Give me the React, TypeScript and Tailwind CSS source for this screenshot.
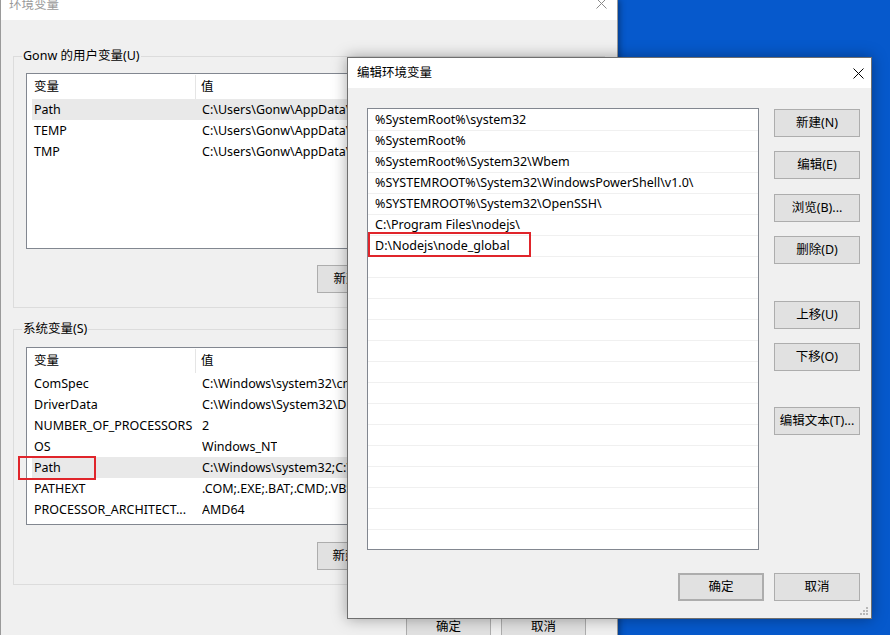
import React from 'react'

type Row = { name: string; value: string; hot?: boolean }

const userVars: Row[] = [
  { name: 'Path', value: 'C:\\Users\\Gonw\\AppData\\Local\\Microsoft\\WindowsApps;', hot: true },
  { name: 'TEMP', value: 'C:\\Users\\Gonw\\AppData\\Local\\Temp' },
  { name: 'TMP', value: 'C:\\Users\\Gonw\\AppData\\Local\\Temp' },
]

const sysVars: Row[] = [
  { name: 'ComSpec', value: 'C:\\Windows\\system32\\cmd.exe' },
  { name: 'DriverData', value: 'C:\\Windows\\System32\\Drivers\\DriverData' },
  { name: 'NUMBER_OF_PROCESSORS', value: '2' },
  { name: 'OS', value: 'Windows_NT' },
  { name: 'Path', value: 'C:\\Windows\\system32;C:\\Windows;C:\\Windows\\System32\\Wbem;', hot: true },
  { name: 'PATHEXT', value: '.COM;.EXE;.BAT;.CMD;.VBS;.VBE;.JS;.JSE;.WSF;.WSH;.MSC' },
  { name: 'PROCESSOR_ARCHITECT...', value: 'AMD64' },
]

const paths = [
  '%SystemRoot%\\system32',
  '%SystemRoot%',
  '%SystemRoot%\\System32\\Wbem',
  '%SYSTEMROOT%\\System32\\WindowsPowerShell\\v1.0\\',
  '%SYSTEMROOT%\\System32\\OpenSSH\\',
  'C:\\Program Files\\nodejs\\',
  'D:\\Nodejs\\node_global',
]

function CloseX({ color = '#000' }: { color?: string }) {
  return (
    <svg width="11" height="11" viewBox="0 0 11 11">
      <path d="M0.5 0.5 L10.5 10.5 M10.5 0.5 L0.5 10.5" stroke={color} strokeWidth="1" />
    </svg>
  )
}

function Btn({ children, className = '' }: { children: React.ReactNode; className?: string }) {
  return (
    <div
      className={
        'h-[28px] shrink-0 bg-[#e1e1e1] border border-[#adadad] flex items-center justify-center text-black whitespace-nowrap ' +
        className
      }
    >
      {children}
    </div>
  )
}

function VarList({ rows, height }: { rows: Row[]; height: string }) {
  return (
    <div className={'bg-white border border-[#828790] overflow-hidden ' + height}>
      <div className="h-[25px] flex items-center pt-[1px]">
        <div className="w-[169px] pl-[7px] h-full flex items-center border-r border-[#e5e5e5]">变量</div>
        <div className="pl-[5px]">值</div>
      </div>
      {rows.map((r) => (
        <div key={r.name} className={'ml-[5px] h-[21px] flex items-center pt-[1px] ' + (r.hot ? 'bg-[#e9e9e9]' : '')}>
          <div className="w-[170px] pl-[2px] whitespace-nowrap overflow-hidden">{r.name}</div>
          <div className="whitespace-nowrap overflow-hidden">{r.value}</div>
        </div>
      ))}
    </div>
  )
}

function BackWindow() {
  return (
    <div className="absolute left-0 top-0 w-[618px] h-[650px] bg-[#f0f0f0] border-x border-[#9a9a9a] shadow-[2px_0_6px_rgba(0,0,0,0.35)]">
      <div className="h-[20px] bg-white flex items-start justify-between pl-[8px] pr-[10px]">
        <span className="leading-[10px] text-[#999999]">环境变量</span>
        <div className="-mt-[2px]">
          <CloseX color="#8a8a8a" />
        </div>
      </div>
      <div className="px-[12px] pt-[36px]">
        {/* user variables */}
        <div className="relative h-[252px] border border-[#dcdcdc] px-[12px] pt-[16px]">
          <span className="absolute left-[8px] -top-[10px] bg-[#f0f0f0] px-[1px] leading-[18px]">Gonw 的用户变量(U)</span>
          <VarList rows={userVars} height="h-[176px]" />
          <div className="mt-[16px] flex justify-end gap-[10px]">
            <Btn className="w-[85px]">新建(N)...</Btn>
            <Btn className="w-[85px]">编辑(E)...</Btn>
            <Btn className="w-[85px]">删除(D)</Btn>
          </div>
        </div>
        {/* system variables */}
        <div className="relative mt-[21px] h-[256px] border border-[#dcdcdc] px-[12px] pt-[17px]">
          <span className="absolute left-[8px] -top-[10px] bg-[#f0f0f0] px-[1px] leading-[18px]">系统变量(S)</span>
          <VarList rows={sysVars} height="h-[178px]" />
          <div className="mt-[17px] flex justify-end gap-[10px]">
            <Btn className="w-[85px]">新建(W)...</Btn>
            <Btn className="w-[85px]">编辑(I)...</Btn>
            <Btn className="w-[85px]">删除(L)</Btn>
          </div>
        </div>
        <div className="mt-[28px] flex justify-end gap-[10px] pr-[19px]">
          <Btn className="w-[85px]">确定</Btn>
          <Btn className="w-[85px]">取消</Btn>
        </div>
      </div>
    </div>
  )
}

function EditWindow() {
  const empty = Array.from({ length: 14 })
  return (
    <div className="absolute left-[347px] top-[57px] w-[525px] h-[562px] bg-[#f0f0f0] border border-[#6f6f6f] shadow-[0_0_14px_rgba(0,0,0,0.35)] flex flex-col">
      <div className="h-[30px] bg-white flex items-center justify-between pl-[9px] pr-[7px] shrink-0">
        <span>编辑环境变量</span>
        <CloseX />
      </div>
      <div className="flex pl-[19px] pr-[11px] pt-[20px]">
        <div className="relative w-[392px] h-[442px] bg-white border border-[#828790] pt-[1px] overflow-hidden">
          {paths.map((p) => (
            <div key={p} className="h-[21px] border-b border-[#f0f0f0] pl-[7px] pt-[1px] flex items-center whitespace-nowrap">
              {p}
            </div>
          ))}
          {empty.map((_, i) => (
            <div key={i} className="h-[21px] border-b border-[#f0f0f0]" />
          ))}
          <div className="absolute left-0 top-[123px] w-[163px] h-[25px] border-2 border-[#e0252b]" />
        </div>
        <div className="ml-[15px] pt-[1px] flex flex-col">
          <Btn className="w-[86px]">新建(N)</Btn>
          <Btn className="w-[86px] mt-[14px]">编辑(E)</Btn>
          <Btn className="w-[86px] mt-[15px]">浏览(B)...</Btn>
          <Btn className="w-[86px] mt-[14px]">删除(D)</Btn>
          <Btn className="w-[86px] mt-[37px]">上移(U)</Btn>
          <Btn className="w-[86px] mt-[14px]">下移(O)</Btn>
          <Btn className="w-[86px] mt-[36px]">编辑文本(T)...</Btn>
        </div>
      </div>
      <div className="flex justify-end gap-[10px] pr-[11px] mt-[23px]">
        <Btn className="w-[86px] border-2 border-[#0078d7]">确定</Btn>
        <Btn className="w-[86px]">取消</Btn>
      </div>
      <div className="absolute right-[3px] bottom-[3px]">
        <svg width="9" height="9" viewBox="0 0 9 9">
          <rect x="7" y="1" width="2" height="2" fill="#b8b8b8" />
          <rect x="4" y="4" width="2" height="2" fill="#b8b8b8" />
          <rect x="7" y="4" width="2" height="2" fill="#b8b8b8" />
          <rect x="1" y="7" width="2" height="2" fill="#b8b8b8" />
          <rect x="4" y="7" width="2" height="2" fill="#b8b8b8" />
          <rect x="7" y="7" width="2" height="2" fill="#b8b8b8" />
        </svg>
      </div>
    </div>
  )
}

export default function App() {
  return (
    <div className="relative w-[890px] h-[635px] overflow-hidden bg-[#0659cc] text-[12.5px] text-black font-['Noto_Sans','Noto_Sans_CJK_SC',sans-serif]">
      <BackWindow />
      <div className="absolute left-[18px] top-[456px] w-[78px] h-[24px] border-2 border-[#e0252b]" />
      <EditWindow />
    </div>
  )
}
